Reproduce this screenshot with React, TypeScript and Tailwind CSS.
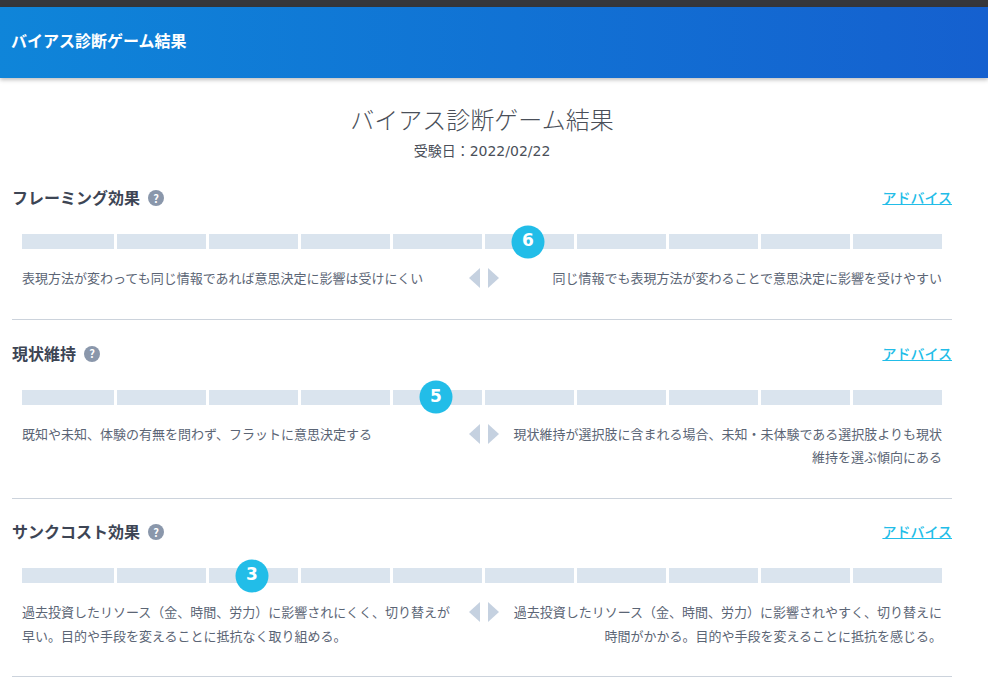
const cells = [1, 2, 3, 4, 5, 6, 7, 8, 9, 10];

const results = [
  {
    title: 'フレーミング効果',
    score: 6,
    left: '表現方法が変わっても同じ情報であれば意思決定に影響は受けにくい',
    right: '同じ情報でも表現方法が変わることで意思決定に影響を受けやすい',
  },
  {
    title: '現状維持',
    score: 5,
    left: '既知や未知、体験の有無を問わず、フラットに意思決定する',
    right: '現状維持が選択肢に含まれる場合、未知・未体験である選択肢よりも現状維持を選ぶ傾向にある',
  },
  {
    title: 'サンクコスト効果',
    score: 3,
    left: '過去投資したリソース（金、時間、労力）に影響されにくく、切り替えが早い。目的や手段を変えることに抵抗なく取り組める。',
    right: '過去投資したリソース（金、時間、労力）に影響されやすく、切り替えに時間がかかる。目的や手段を変えることに抵抗を感じる。',
  },
];

function ResultRow({ title, score, left, right }: { title: string; score: number; left: string; right: string }) {
  return (
    <section className="border-b border-[#ccd3dc] pt-[20.5px] pb-[29.2px]">
      {/* Heading */}
      <div className="flex items-center justify-between h-6">
        <div className="flex items-center gap-2">
          <h2 className="text-base font-bold text-[#3d4554]">{title}</h2>
          <span className="flex items-center justify-center w-4 h-4 mt-[2px] rounded-full bg-[#8a97ab] text-white text-[11px] font-bold leading-none">?</span>
        </div>
        <a href="#" className="text-sm font-medium text-[#22bde8] underline">アドバイス</a>
      </div>

      {/* Score bar */}
      <div className="grid grid-cols-10 mx-2.5 mt-[25px]">
        {cells.map((n) => (
          <div key={n} className="relative pl-[3px] first:pl-0">
            <div className="h-[15px] bg-[#dae4ee]" />
            {n === score && (
              <span className="absolute left-1/2 top-1/2 -translate-x-1/2 -translate-y-1/2 flex items-center justify-center w-[33px] h-[33px] pb-[2px] rounded-full bg-[#22bde8] text-white text-[17px] font-bold font-['DejaVu_Sans',sans-serif]">
                {score}
              </span>
            )}
          </div>
        ))}
      </div>

      {/* Scale descriptions */}
      <div className="grid grid-cols-[430px_60px_430px] mx-2.5 mt-[17px] text-[13px] leading-[23.4px] text-[#5b6575]">
        <p>{left}</p>
        <div className="flex justify-center gap-2 h-6 items-center pl-1">
          <span className="border-y-[10px] border-y-transparent border-r-[11px] border-r-[#c5d1e0]" />
          <span className="border-y-[10px] border-y-transparent border-l-[11px] border-l-[#c5d1e0]" />
        </div>
        <p className="text-right">{right}</p>
      </div>
    </section>
  );
}

export default function App() {
  return (
    <div className="min-h-screen bg-white font-['Noto_Sans_CJK_JP',sans-serif]">
      <div className="h-[7px] bg-[#36373b]" />
      <header className="flex items-center h-[71px] pl-[11px] pb-[6px] bg-gradient-to-r from-[#0f85d9] to-[#1560cf] shadow-[0_2px_4px_rgba(0,0,0,0.25)]">
        <h1 className="text-base font-bold text-white">バイアス診断ゲーム結果</h1>
      </header>

      <main className="w-[940px] ml-3">
        <div className="text-center pt-[23px] pb-[1.5px]">
          <h2 className="text-2xl font-light leading-9 text-[#4a4f59]">バイアス診断ゲーム結果</h2>
          <p className="text-sm leading-6 text-[#4a4f59] mt-px">
            受験日：<span className="font-['DejaVu_Sans',sans-serif]">2022/02/22</span>
          </p>
        </div>
        {results.map((r) => (
          <ResultRow key={r.title} {...r} />
        ))}
      </main>
    </div>
  );
}
